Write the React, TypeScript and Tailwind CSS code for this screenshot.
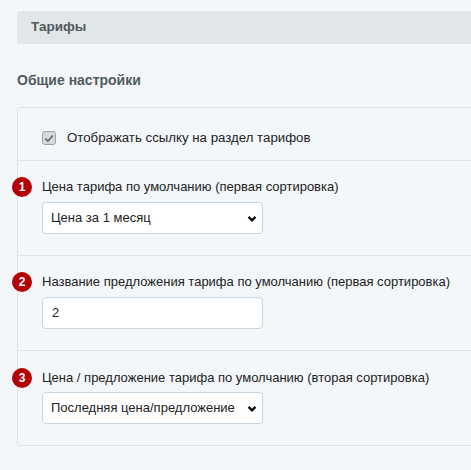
import React from 'react';

const Chevron = () => (
  <svg className="pointer-events-none absolute right-[5px] top-[12px]" width="10" height="8" viewBox="0 0 10 8">
    <path d="M1.5 1.8 L5 5.3 L8.5 1.8" fill="none" stroke="#111" strokeWidth="2.4" />
  </svg>
);

const Label: React.FC<{ n: number; children: React.ReactNode }> = ({ n, children }) => (
  <div className="ml-[-6px] flex items-center gap-[10px] text-[13px] leading-[18px] text-[#222]">
    <span className="flex h-[20px] w-[20px] shrink-0 items-center justify-center rounded-full bg-[#b30000] text-[12px] font-bold text-white">
      {n}
    </span>
    <span>{children}</span>
  </div>
);

const FakeSelect: React.FC<{ value: string }> = ({ value }) => (
  <div className="relative ml-[24px] h-[32px] w-[221px] rounded-[4px] border border-[#c9d5de] bg-white">
    <div className="pl-[8px] pt-[6px] text-[13px] leading-[18px] text-[#222]">{value}</div>
    <Chevron />
  </div>
);

export default function App() {
  return (
    <div
      className="h-[470px] w-[471px] overflow-hidden bg-[#f4f7f9] pl-[17px] pt-[11px]"
      style={{ fontFamily: '"Liberation Sans", Arial, sans-serif' }}
    >
      <div className="flex h-[33px] items-center rounded-l-[3px] bg-[#e1e6e8] pl-[14px] text-[13.5px] font-bold text-[#505a60]">
        Тарифы
      </div>

      <div className="mt-[26px] text-[14px] font-bold leading-[20px] text-[#505a60]">Общие настройки</div>

      <div className="mt-[17px] mr-[-20px] rounded-[3px] border border-[#dde4e9]">
        {/* checkbox row */}
        <div className="flex items-center pl-[24px] pt-[21px] pb-[13px]">
          <span className="flex h-[14px] w-[14px] items-center justify-center rounded-[3px] border border-[#9da3a8] bg-[#d6d9dc]">
            <svg width="10" height="9" viewBox="0 0 10 9">
              <path d="M1.2 4.6 L3.9 7.2 L8.8 1.4" fill="none" stroke="#5d6166" strokeWidth="1.6" />
            </svg>
          </span>
          <span className="ml-[11px] text-[13.25px] leading-[18px] text-[#222]">Отображать ссылку на раздел тарифов</span>
        </div>

        {/* row 1 */}
        <div className="flex flex-col gap-[5px] border-t border-[#dde4e9] pt-[16px] pb-[21px]">
          <Label n={1}>Цена тарифа по умолчанию (первая сортировка)</Label>
          <FakeSelect value="Цена за 1 месяц" />
        </div>

        {/* row 2 */}
        <div className="flex flex-col gap-[5px] border-t border-[#dde4e9] pt-[16px] pb-[21px]">
          <Label n={2}>Название предложения тарифа по умолчанию (первая сортировка)</Label>
          <div className="ml-[24px] h-[32px] w-[221px] rounded-[4px] border border-[#c9d5de] bg-white pl-[9px] pt-[6px] text-[13px] leading-[18px] text-[#222]">
            2
          </div>
        </div>

        {/* row 3 */}
        <div className="flex flex-col gap-[4px] border-t border-[#dde4e9] pt-[17px] pb-[21px]">
          <Label n={3}>Цена / предложение тарифа по умолчанию (вторая сортировка)</Label>
          <FakeSelect value="Последняя цена/предложение" />
        </div>
      </div>
    </div>
  );
}
